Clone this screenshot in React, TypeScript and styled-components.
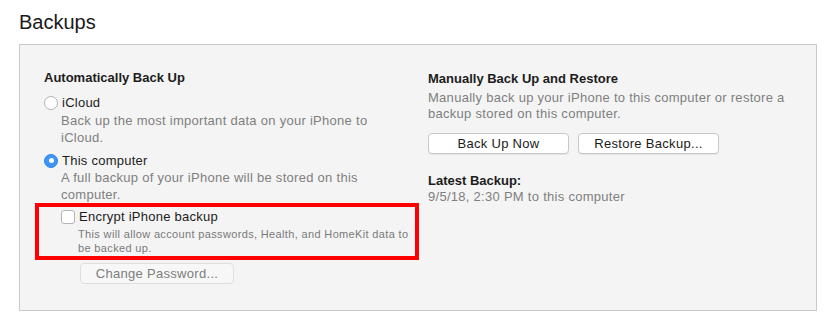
import styled, { createGlobalStyle } from 'styled-components';

const GlobalStyle = createGlobalStyle`
  body {
    margin: 0;
    background: #ffffff;
    font-family: "Liberation Sans", Arial, sans-serif;
    color: #1c1c1c;
  }
`;

const Page = styled.div`
  padding: 10px 0 0 19px;
  width: 798px;
`;

const Title = styled.h1`
  margin: 0 0 10px 0;
  font-size: 20px;
  font-weight: 400;
  line-height: 24px;
  color: #1a1a1a;
`;

const Panel = styled.section`
  box-sizing: border-box;
  height: 267px;
  background: #f4f4f4;
  border: 1px solid #c9c9c9;
  display: grid;
  grid-template-columns: 384px 1fr;
  padding: 24px 0 0 24px;
`;

const Column = styled.div<{ $offset?: number }>`
  display: flex;
  flex-direction: column;
  padding-top: ${(p) => p.$offset ?? 0}px;
`;

const Heading = styled.h2<{ $top?: number }>`
  margin: ${(p) => p.$top ?? 0}px 0 0 0;
  font-size: 13px;
  font-weight: 700;
  line-height: 17px;
`;

const Option = styled.label<{ $gap?: number }>`
  display: flex;
  align-items: center;
  gap: 4px;
  font-size: 13px;
  line-height: 17px;
  letter-spacing: 0.25px;
  margin-top: ${(p) => p.$gap ?? 0}px;
`;

const Radio = styled.span<{ $checked?: boolean }>`
  box-sizing: border-box;
  width: 14px;
  height: 14px;
  border-radius: 50%;
  display: inline-flex;
  align-items: center;
  justify-content: center;
  background: ${(p) => (p.$checked ? '#3d95f8' : '#ffffff')};
  border: 1px solid ${(p) => (p.$checked ? '#2f86ea' : '#b4b4b4')};

  &::after {
    content: '';
    width: 5px;
    height: 5px;
    border-radius: 50%;
    background: #ffffff;
    display: ${(p) => (p.$checked ? 'block' : 'none')};
  }
`;

const Checkbox = styled.span`
  box-sizing: border-box;
  width: 14px;
  height: 14px;
  border-radius: 3px;
  background: #ffffff;
  border: 1px solid #b4b4b4;
`;

const Description = styled.p<{ $indent?: number; $lh?: number; $top?: number }>`
  margin: ${(p) => p.$top ?? 0}px 0 0 ${(p) => p.$indent ?? 0}px;
  font-size: 13px;
  line-height: ${(p) => p.$lh ?? 17}px;
  letter-spacing: 0.28px;
  color: #7f7f7f;
`;

const SmallDescription = styled.p`
  margin: 2px 0 0 17px;
  font-size: 11px;
  line-height: 14px;
  letter-spacing: 0.35px;
  color: #7a7a7a;
`;

const EncryptBox = styled.div`
  margin: 0 0 0 -9px;
  width: 384px;
  box-sizing: border-box;
  border: 4px solid #ff0000;
  padding: 1px 0 1px 22px;
`;

const ButtonRow = styled.div<{ $top: number; $indent?: number }>`
  display: flex;
  gap: 9px;
  margin: ${(p) => p.$top}px 0 0 ${(p) => p.$indent ?? 0}px;
`;

const Button = styled.button<{ $w: number; $disabled?: boolean }>`
  box-sizing: border-box;
  width: ${(p) => p.$w}px;
  height: 21px;
  padding: 0;
  border-radius: 4px;
  border: 1px solid ${(p) => (p.$disabled ? '#dedede' : '#c8c8c8')};
  background: ${(p) => (p.$disabled ? '#f7f7f7' : '#ffffff')};
  color: ${(p) => (p.$disabled ? '#7d7d7d' : '#1a1a1a')};
  font-family: "Liberation Sans", Arial, sans-serif;
  font-size: 13px;
  line-height: 19px;
  letter-spacing: 0.3px;
  box-shadow: ${(p) => (p.$disabled ? 'none' : '0 1px 0 rgba(0,0,0,0.06)')};
`;

export default function App() {
  return (
    <>
      <GlobalStyle />
      <Page>
        <Title>Backups</Title>
        <Panel>
          <Column>
            <Heading>Automatically Back Up</Heading>
            <Option $gap={8}>
              <Radio />
              iCloud
            </Option>
            <Description $indent={17} $top={1}>
              Back up the most important data on your iPhone to
              <br />
              iCloud.
            </Description>
            <Option $gap={6}>
              <Radio $checked />
              This computer
            </Option>
            <Description $indent={17}>
              A full backup of your iPhone will be stored on this
              <br />
              computer.
            </Description>
            <EncryptBox>
              <Option>
                <Checkbox />
                Encrypt iPhone backup
              </Option>
              <SmallDescription>
                This will allow account passwords, Health, and HomeKit data to
                <br />
                be backed up.
              </SmallDescription>
            </EncryptBox>
            <ButtonRow $top={3} $indent={36}>
              <Button $w={154} $disabled>
                Change Password...
              </Button>
            </ButtonRow>
          </Column>
          <Column $offset={1}>
            <Heading>Manually Back Up and Restore</Heading>
            <Description $lh={16} $top={3}>
              Manually back up your iPhone to this computer or restore a
              <br />
              backup stored on this computer.
            </Description>
            <ButtonRow $top={11}>
              <Button $w={141}>Back Up Now</Button>
              <Button $w={141}>Restore Backup...</Button>
            </ButtonRow>
            <Heading $top={18}>Latest Backup:</Heading>
            <Description $lh={15}>9/5/18, 2:30 PM to this computer</Description>
          </Column>
        </Panel>
      </Page>
    </>
  );
}
